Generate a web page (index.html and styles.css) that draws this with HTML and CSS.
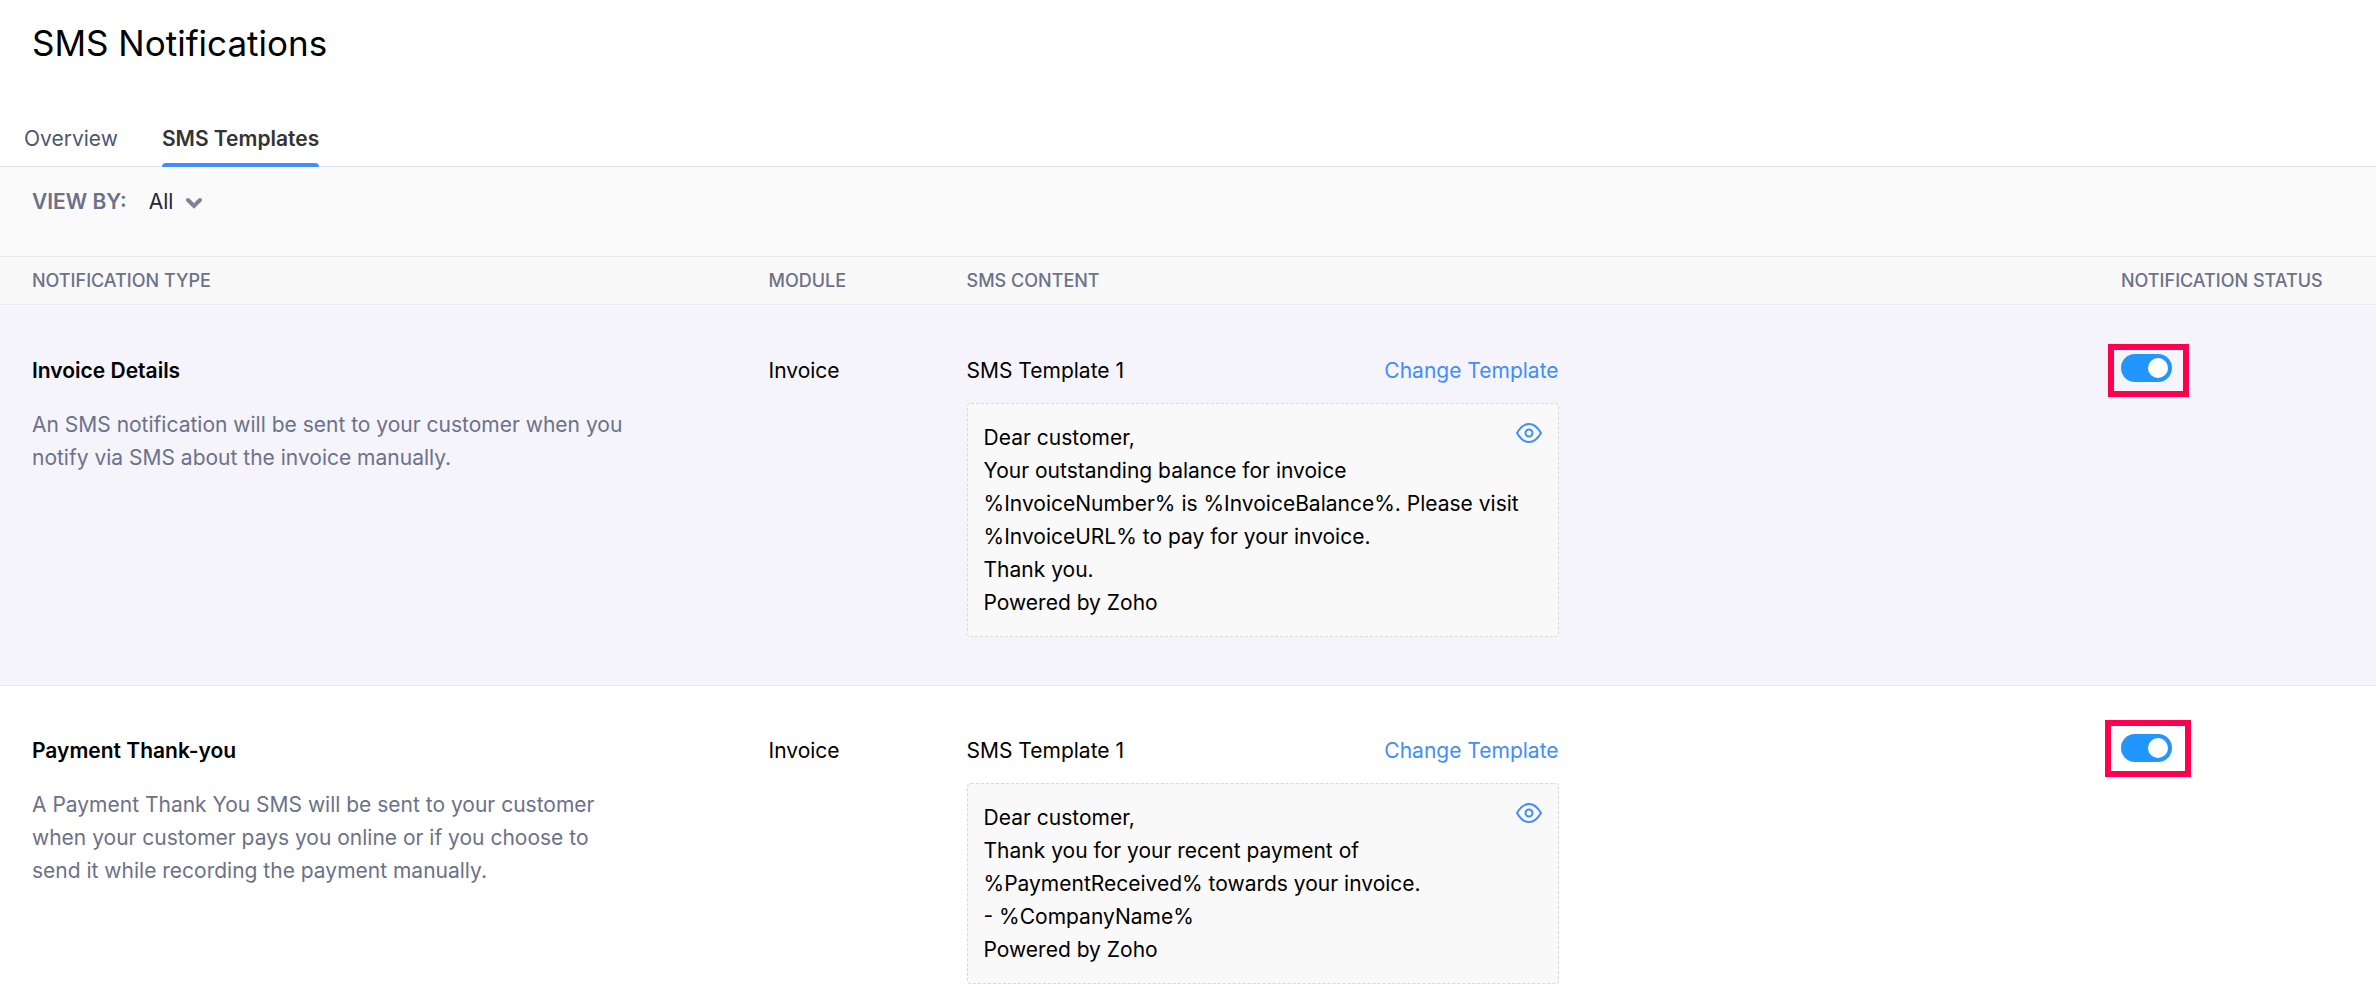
FILE: index.html
```html
<!DOCTYPE html>
<html lang="en">
<head>
    <meta charset="UTF-8">
    <meta name="viewport" content="width=device-width, initial-scale=1.0">
    <title>SMS Notifications</title>
    <link rel="stylesheet" href="styles.css">
</head>
<body>
    <header>
        <h1>SMS Notifications</h1>
        <nav class="tabs">
            <a href="#overview">Overview</a>
            <a href="#templates" class="active">SMS Templates</a>
        </nav>
    </header>

    <main>
        <div class="filter">
            <label for="viewBy">VIEW BY:</label>
            <div class="select">
                <select id="viewBy">
                    <option>All</option>
                </select>
                <svg viewBox="0 0 16 10" aria-hidden="true"><path d="M2 2l6 6 6-6"/></svg>
            </div>
        </div>

        <table>
            <colgroup>
                <col class="col-type">
                <col class="col-module">
                <col>
                <col class="col-status">
            </colgroup>
            <thead>
                <tr>
                    <th>NOTIFICATION TYPE</th>
                    <th>MODULE</th>
                    <th>SMS CONTENT</th>
                    <th>NOTIFICATION STATUS</th>
                </tr>
            </thead>
            <tbody>
                <tr class="selected">
                    <td>
                        <h2>Invoice Details</h2>
                        <p class="desc">An SMS notification will be sent to your customer when you notify via SMS about the invoice manually.</p>
                    </td>
                    <td>Invoice</td>
                    <td>
                        <div class="template">
                            <div class="template-head">
                                <span>SMS Template 1</span>
                                <a href="#change">Change Template</a>
                            </div>
                            <div class="message">
                                <p>Dear customer,<br>
                                Your outstanding balance for invoice<br>
                                %InvoiceNumber% is %InvoiceBalance%. Please visit %InvoiceURL% to pay for your invoice.<br>
                                Thank you.<br>
                                Powered by Zoho</p>
                                <button type="button" aria-label="Preview">
                                    <svg viewBox="0 0 26 20"><path d="M1 10C4.500 4 8.500 1 13 1s8.500 3 12 9c-3.500 6-7.500 9-12 9S4.500 16 1 10z"/><circle cx="13" cy="10" r="3.500"/></svg>
                                </button>
                            </div>
                        </div>
                    </td>
                    <td>
                        <div class="status">
                            <input type="checkbox" class="toggle" aria-label="Invoice Details status" checked>
                            <span class="highlight"></span>
                        </div>
                    </td>
                </tr>
                <tr>
                    <td>
                        <h2>Payment Thank-you</h2>
                        <p class="desc">A Payment Thank You SMS will be sent to your customer when your customer pays you online or if you choose to send it while recording the payment manually.</p>
                    </td>
                    <td>Invoice</td>
                    <td>
                        <div class="template">
                            <div class="template-head">
                                <span>SMS Template 1</span>
                                <a href="#change">Change Template</a>
                            </div>
                            <div class="message">
                                <p>Dear customer,<br>
                                Thank you for your recent payment of<br>
                                %PaymentReceived% towards your invoice.<br>
                                - %CompanyName%<br>
                                Powered by Zoho</p>
                                <button type="button" aria-label="Preview">
                                    <svg viewBox="0 0 26 20"><path d="M1 10C4.500 4 8.500 1 13 1s8.500 3 12 9c-3.500 6-7.500 9-12 9S4.500 16 1 10z"/><circle cx="13" cy="10" r="3.500"/></svg>
                                </button>
                            </div>
                        </div>
                    </td>
                    <td>
                        <div class="status">
                            <input type="checkbox" class="toggle" aria-label="Payment Thank-you status" checked>
                            <span class="highlight large"></span>
                        </div>
                    </td>
                </tr>
            </tbody>
        </table>
    </main>
</body>
</html>
```
FILE: styles.css
```css
* {
    margin: 0;
    padding: 0;
    box-sizing: border-box;
}
body {
    background: #fff;
    color: #000;
    font-family: Inter, sans-serif;
    font-size: 21px;
    line-height: 33px;
}
a {
    color: #408dfb;
    text-decoration: none;
}

/* header */
h1 {
    padding: 20px 32px 0;
    font-size: 35px;
    font-weight: 400;
    line-height: 46px;
}
.tabs {
    display: flex;
    gap: 44px;
    margin-top: 56px;
    padding: 0 24px;
    border-bottom: 1px solid #dcdfea;
}
.tabs a {
    height: 44px;
    color: #4d5573;
}
.tabs .active {
    display: flex;
    flex-direction: column;
    justify-content: space-between;
    margin-bottom: -1px;
    height: 45px;
    color: #333;
    font-weight: 600;
}
.tabs .active::after {
    content: "";
    height: 4px;
    background: #408dfb;
    border-radius: 4px 4px 0 0;
}

/* filter */
.filter {
    display: flex;
    gap: 22px;
    height: 89px;
    padding: 18px 32px;
    background: #fafafa;
}
.filter label {
    color: #6c718a;
    font-weight: 600;
}
.select {
    position: relative;
}
.select select {
    width: 56px;
    height: 33px;
    appearance: none;
    border: none;
    background: none;
    color: #21263c;
    font: inherit;
}
.select svg {
    position: absolute;
    right: 3px;
    top: 13px;
    width: 16px;
    height: 10px;
    overflow: visible;
    fill: none;
    stroke: #7f8299;
    stroke-width: 4;
    stroke-linecap: round;
    pointer-events: none;
}

/* table */
table {
    width: 100%;
    table-layout: fixed;
    border-spacing: 0;
}
.col-type {
    width: 31%;
}
.col-module {
    width: 198px;
}
.col-status {
    width: 287px;
}
th {
    height: 49px;
    padding-left: 32px;
    background: #f9f9f9;
    border-top: 1px solid #e6e7f0;
    border-bottom: 1px solid #e6e7f0;
    color: #6c718a;
    font-size: 18px;
    font-weight: 500;
    line-height: 24px;
    text-align: left;
}
td {
    padding: 48px 0 48px 32px;
    vertical-align: top;
}
.selected td {
    background: #f5f4fa;
    border-top: 1px solid #fff;
    border-bottom: 1px solid #e6e7f0;
}
h2 {
    font-size: 21px;
    font-weight: 600;
    line-height: 33px;
}
.desc {
    max-width: 600px;
    margin-top: 21px;
    color: #6c718a;
}
.template {
    max-width: 592px;
}
.template-head {
    display: flex;
    justify-content: space-between;
}
.message {
    position: relative;
    margin-top: 16px;
    padding: 17px 16px;
    background: #f9f9f9;
    border: 1px dashed #d9d9d9;
    border-radius: 4px;
}
.message button {
    position: absolute;
    top: 16px;
    right: 16px;
    background: none;
    border: none;
    cursor: pointer;
}
.message svg {
    display: block;
    width: 26px;
    height: 26px;
    fill: none;
    stroke: #408dfb;
    stroke-width: 2;
}

/* status */
.status {
    position: relative;
    width: 51px;
    height: 28px;
}
.toggle {
    display: flex;
    align-items: center;
    width: 51px;
    height: 28px;
    padding: 4px;
    appearance: none;
    background: #c5c8d6;
    border-radius: 14px;
    cursor: pointer;
}
.toggle::before {
    content: "";
    width: 20px;
    height: 20px;
    background: #fff;
    border-radius: 50%;
}
.toggle:checked {
    justify-content: flex-end;
    background: #2196ff;
}
.highlight {
    position: absolute;
    inset: -10px -17px -15px -13px;
    border: 6px solid #ff0050;
    pointer-events: none;
}
.highlight.large {
    inset: -14px -19px -15px -16px;
}
```
